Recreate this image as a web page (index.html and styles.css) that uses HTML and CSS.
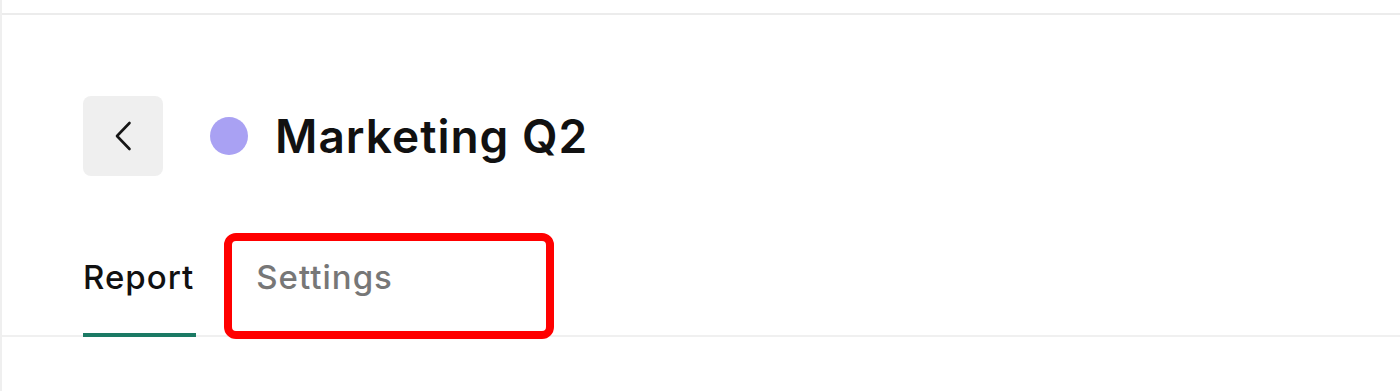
FILE: index.html
```html
<!DOCTYPE html>
<html>
<head>
<meta charset="utf-8">
<link rel="stylesheet" href="styles.css">
</head>
<body>
<div class="frame">
  <div class="topbar"></div>
  <div class="header">
    <button class="back" aria-label="Back">
      <svg width="80" height="80" viewBox="0 0 80 80"><path d="M46.5 27 L34 40 L46.5 53" fill="none" stroke="#151515" stroke-width="2.6" stroke-linecap="round" stroke-linejoin="round"/></svg>
    </button>
    <span class="dot"></span>
    <h1 class="title">Marketing Q2</h1>
  </div>
  <div class="tabs">
    <div class="tab active">Report</div>
    <div class="tab">Settings</div>
    <div class="highlight"></div>
  </div>
</div>
</body>
</html>
```

FILE: styles.css
```css
html, body {
  margin: 0;
  padding: 0;
  background: #ffffff;
}
body {
  font-family: Inter, "Noto Sans", sans-serif;
}
.frame {
  min-height: 391px;
  border-left: 2px solid #efefef;
}
.topbar {
  height: 13px;
  border-bottom: 2px solid #ececec;
}
.header {
  display: flex;
  align-items: center;
  padding: 81px 0 0 81px;
}
.back {
  width: 80px;
  height: 80px;
  border: none;
  border-radius: 8px;
  background: #efefef;
  padding: 0;
  display: flex;
  align-items: center;
  justify-content: center;
}
.back svg { display: block; }
.dot {
  width: 38px;
  height: 38px;
  border-radius: 50%;
  background: #a9a1f3;
  margin-left: 47px;
}
.title {
  margin: 0 0 0 27px;
  font-size: 46px;
  font-weight: 600;
  color: #111111;
  letter-spacing: 1px;
  line-height: 52px;
}
.tabs {
  position: relative;
  display: flex;
  gap: 60px;
  margin-top: 82px;
  padding-left: 81px;
  border-bottom: 2px solid #f0f0f0;
}
.tab {
  font-size: 33px;
  line-height: 38px;
  font-weight: 500;
  letter-spacing: 1px;
  color: #777777;
  padding: 0 2px 37px 0;
  border-bottom: 4px solid transparent;
  margin-bottom: -2px;
}
.tab.active {
  color: #111111;
  border-bottom-color: #1b7a64;
}
.highlight {
  position: absolute;
  left: 222px;
  top: -25px;
  width: 330px;
  height: 106px;
  box-sizing: border-box;
  border: 8px solid #ff0000;
  border-radius: 12px;
}
```
